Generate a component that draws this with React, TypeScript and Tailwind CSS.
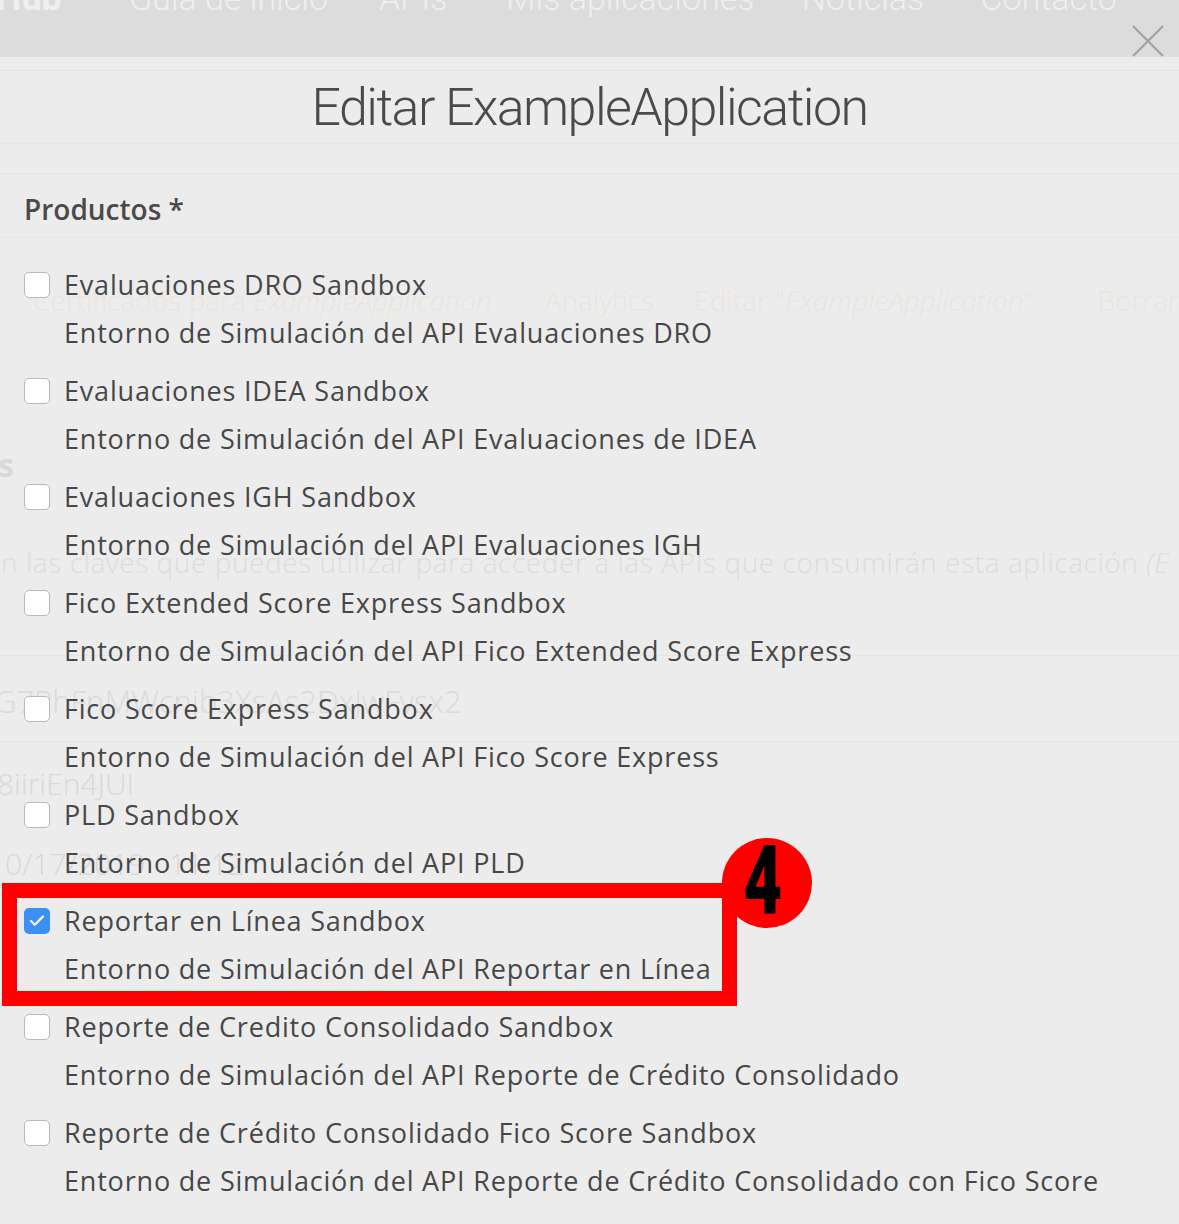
import { Check } from "lucide-react"

interface Product {
  name: string
  description: string
  checked?: boolean
}

const products: Product[] = [
  { name: "Evaluaciones DRO Sandbox", description: "Entorno de Simulación del API Evaluaciones DRO" },
  { name: "Evaluaciones IDEA Sandbox", description: "Entorno de Simulación del API Evaluaciones de IDEA" },
  { name: "Evaluaciones IGH Sandbox", description: "Entorno de Simulación del API Evaluaciones IGH" },
  { name: "Fico Extended Score Express Sandbox", description: "Entorno de Simulación del API Fico Extended Score Express" },
  { name: "Fico Score Express Sandbox", description: "Entorno de Simulación del API Fico Score Express" },
  { name: "PLD Sandbox", description: "Entorno de Simulación del API PLD" },
  { name: "Reportar en Línea Sandbox", description: "Entorno de Simulación del API Reportar en Línea", checked: true },
  { name: "Reporte de Credito Consolidado Sandbox", description: "Entorno de Simulación del API Reporte de Crédito Consolidado" },
  {
    name: "Reporte de Crédito Consolidado Fico Score Sandbox",
    description: "Entorno de Simulación del API Reporte de Crédito Consolidado con Fico Score",
  },
]

// label + slot width so the faded nav lines up with the page behind the dialog
const navItems: [string, string][] = [
  ["Guía de inicio", "w-[252px]"],
  ["APIs", "w-[128px]"],
  ["Mis aplicaciones", "w-[298px]"],
  ["Noticias", "w-[180px]"],
  ["Contacto", "w-[200px]"],
]

function ProductRow({ product }: { product: Product }) {
  return (
    <li className="flex pl-[24px]">
      <div className="flex h-[48px] items-center">
        {product.checked ? (
          <span className="flex h-[26px] w-[26px] items-center justify-center rounded-[5px] bg-[#3b8ff6]">
            <Check className="h-[18px] w-[18px] text-white" strokeWidth={3} />
          </span>
        ) : (
          <span className="h-[26px] w-[26px] rounded-[5px] border border-[#b9b9b9] bg-white" />
        )}
      </div>
      <div className="ml-[14px] whitespace-nowrap font-['Open_Sans',sans-serif] text-[27px] leading-[48px] tracking-[0.03em] text-[#474747]">
        <div>{product.name}</div>
        <div>{product.description}</div>
      </div>
    </li>
  )
}

export default function App() {
  return (
    <div className="relative h-[1224px] w-[1179px] overflow-hidden bg-[#ececec] font-['Roboto',sans-serif]">
      {/* page behind the dialog */}
      <header className="h-[57px] overflow-hidden bg-[#dcdcdc]">
        <nav className="-mt-[22px] flex items-center whitespace-nowrap text-[34px] font-light leading-[40px] text-[#efefef]">
          <span className="-ml-[4px] w-[134px] text-[36px] font-bold">Hub</span>
          {navItems.map(([label, w]) => (
            <span key={label} className={w}>
              {label}
            </span>
          ))}
        </nav>
      </header>
      <main className="font-['Open_Sans',sans-serif] text-[28px] font-light">
        <div className="mt-[13px] h-[73px] border-t border-[#e5e5e5]" />
        <div className="h-[30px] border-t border-[#e6e6e6]" />
        <div className="h-[64px] border-t border-[#e5e5e5]" />
        <div className="h-[43px] border-t border-[#e7e7e7]" />
        <div className="flex h-[40px] items-center whitespace-nowrap leading-[40px] text-[#ebe4dc]">
          <span className="ml-[33px] w-[514px]">
            Certificados para <em>ExampleApplication</em>
          </span>
          <span className="w-[150px]">Analytics</span>
          <span className="w-[405px]">
            Editar "<em>ExampleApplication</em>"
          </span>
          <span>Borrar</span>
        </div>
        <div className="-ml-[2px] mt-[125px] h-[40px] text-[32px] font-bold leading-[40px] text-[#d9d9d9]">s</div>
        <div className="ml-[1px] mt-[57px] h-[40px] whitespace-nowrap leading-[40px] tracking-[0.02em] text-[#dcdcdc]">
          n las claves que puedes utilizar para acceder a las APIs que consumirán esta aplicación <em>(E</em>
        </div>
        <div className="mt-[73px] border-t border-[#e5e5e5]" />
        <div className="-ml-[6px] mt-[25px] h-[40px] text-[31px] leading-[40px] text-[#dadada]">G7PhFnMWcnjb3XsAs2DxJwFvsx2</div>
        <div className="mt-[20px] border-t border-[#e5e5e5]" />
        <div className="-ml-[3px] mt-[22px] h-[40px] text-[30px] leading-[40px] text-[#d8d8d8]">8iiriEn4JUI</div>
        <div className="-ml-[12px] mt-[40px] h-[40px] whitespace-pre text-[30px] leading-[40px] text-[#d8d8d8]">10/17/2019   11:12</div>
      </main>

      {/* dialog */}
      <div className="absolute inset-0">
        <button className="absolute right-[15px] top-[25px] h-[32px] w-[32px]">
          <svg viewBox="0 0 32 32" className="h-full w-full" fill="none" stroke="#a3a3a3" strokeWidth="2.4">
            <path d="M1 1 L31 31 M31 1 L1 31" />
          </svg>
        </button>
        <h2 className="pt-[78px] text-center text-[52px] font-light leading-[60px] tracking-[-0.03em] text-[#4a4a4a]">
          Editar ExampleApplication
        </h2>
        <h3 className="mt-[51px] pl-[24px] font-['Open_Sans',sans-serif] text-[28px] font-semibold leading-[40px] text-[#4a4a4a]">
          Productos *
        </h3>
        <ul className="mt-[32px] flex flex-col gap-[10px]">
          {products.map((p) => (
            <ProductRow key={p.name} product={p} />
          ))}
        </ul>

        {/* annotation */}
        <div className="absolute left-[2px] top-[883px] h-[123px] w-[735px] border-[15px] border-[#ff0000]" />
        <div className="absolute left-[722px] top-[838px] flex h-[90px] w-[90px] items-center justify-center rounded-full bg-[#ff0000]">
          <span className="-ml-[8px] -mt-[4px] scale-x-[0.7] text-[96px] font-black leading-none text-black">4</span>
        </div>
      </div>
    </div>
  )
}
